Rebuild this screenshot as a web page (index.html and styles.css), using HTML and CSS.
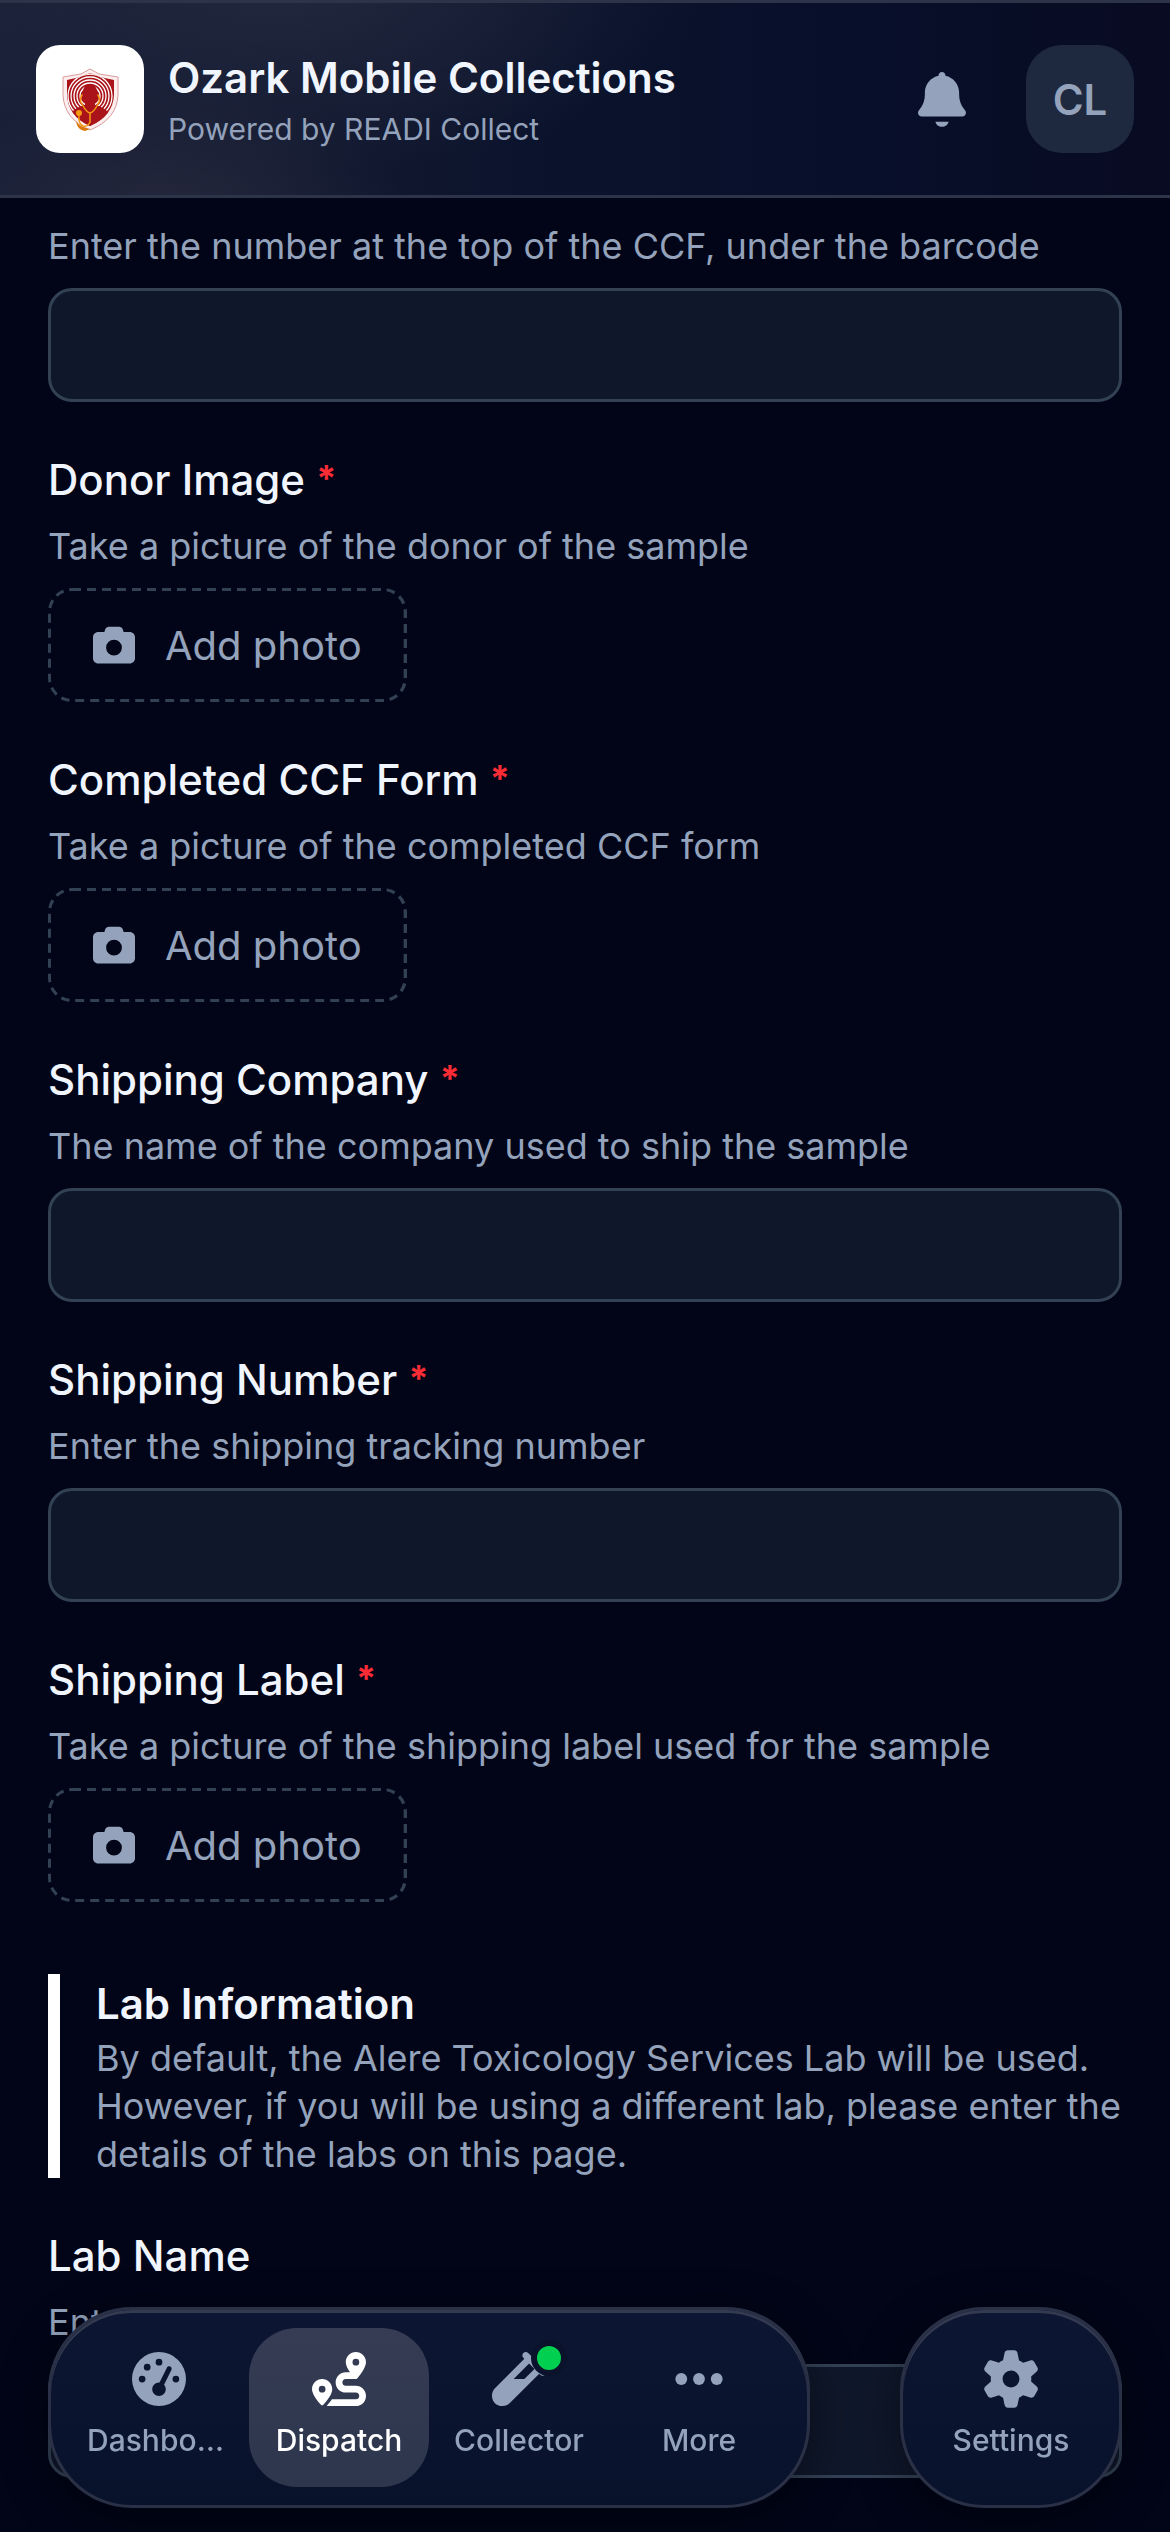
FILE: index.html
```html
<!DOCTYPE html>
<html lang="en">
<head>
<meta charset="utf-8">
<meta name="viewport" content="width=device-width">
<title>Ozark Mobile Collections</title>
<link rel="stylesheet" href="styles.css">
</head>
<body>
<svg class="sprite" aria-hidden="true">
  <symbol id="camera" viewBox="0 0 512 512"><path d="M149.1 64.8L138.7 96 64 96C28.7 96 0 124.7 0 160L0 416c0 35.3 28.7 64 64 64l384 0c35.3 0 64-28.7 64-64l0-256c0-35.3-28.7-64-64-64l-74.7 0-10.4-31.2C356.4 45.2 338.1 32 317.4 32L194.6 32c-20.7 0-39 13.2-45.5 32.8zM256 192a96 96 0 1 1 0 192 96 96 0 1 1 0-192z"/></symbol>
</svg>

<header class="header">
  <div class="logo">
    <svg viewBox="0 0 108 108" aria-hidden="true">
      <clipPath id="shield"><path d="M54 28 64 32 78 35V50Q77 71 54 81 32 71 31 50V35L44 32Z"/></clipPath>
      <path d="M54 24 63 29 82 32V50Q81 74 54 85 28 74 27 50V32L45 29Z" fill="#fbeeee" stroke="#dc9a9c" stroke-width="1"/>
      <g clip-path="url(#shield)">
        <rect x="27" y="24" width="55" height="62" fill="#a91319"/>
        <g fill="none" stroke="#fff" stroke-width="1.3">
          <circle cx="54" cy="51" r="10"/>
          <circle cx="54" cy="51" r="13"/>
          <circle cx="54" cy="51" r="16"/>
          <circle cx="54" cy="51" r="19"/>
          <circle cx="54" cy="51" r="22"/>
        </g>
        <path d="M47 48Q47 39 54 39 61 39 61 48 61 54 59 57V60Q68 62 73 68L72 84H36L35 68Q40 62 49 60V57Q47 54 47 48Z" fill="#a91319"/>
      </g>
      <path d="M40 76Q43 82 54 84L49 86Q41 85 40 76Z" fill="#d97708"/>
      <g fill="none" stroke="#f59a13" stroke-width="1.5" stroke-linecap="round">
        <path d="M46 50Q43 55 46 59 50 67 54 68 58 67 62 59 65 55 62 50"/>
        <path d="M54 68V77Q52 82 47 81 42 79 43 69"/>
      </g>
      <circle cx="43" cy="68" r="3" fill="#f59a13"/>
    </svg>
  </div>
  <div class="brand">
    <h1 class="brand-name">Ozark Mobile Collections</h1>
    <p class="brand-sub">Powered by READI Collect</p>
  </div>
  <button class="bell" type="button" aria-label="Notifications">
    <svg viewBox="0 0 448 512"><path d="M224 0c-17.7 0-32 14.3-32 32l0 3.2C119 50 64 114.6 64 192l0 21.7c0 48.1-16.4 94.8-46.4 132.4L7.8 358.3C2.7 364.6 0 372.4 0 380.5 0 400.1 15.9 416 35.5 416l376.9 0c19.6 0 35.5-15.9 35.5-35.5 0-8.1-2.7-15.9-7.8-22.2l-9.8-12.2C400.4 308.5 384 261.8 384 213.7l0-21.7c0-77.4-55-142-128-156.8l0-3.2c0-17.7-14.3-32-32-32zM162 464c7.1 27.6 32.2 48 62 48s54.9-20.4 62-48l-124 0z"/></svg>
  </button>
  <button class="avatar" type="button" aria-label="Account CL">CL</button>
</header>

<main class="form">
  <div class="field">
    <label class="hint" for="ccf">Enter the number at the top of the CCF, under the barcode</label>
    <input class="input" id="ccf" type="text">
  </div>
  <div class="field">
    <label class="label" for="donor">Donor Image <span class="required">*</span></label>
    <p class="hint">Take a picture of the donor of the sample</p>
    <button class="photo" id="donor" type="button"><svg class="photo-outline" aria-hidden="true"><rect width="100%" height="100%" rx="24"/></svg><svg class="photo-icon"><use href="#camera"/></svg>Add photo</button>
  </div>
  <div class="field">
    <label class="label" for="form">Completed CCF Form <span class="required">*</span></label>
    <p class="hint">Take a picture of the completed CCF form</p>
    <button class="photo" id="form" type="button"><svg class="photo-outline" aria-hidden="true"><rect width="100%" height="100%" rx="24"/></svg><svg class="photo-icon"><use href="#camera"/></svg>Add photo</button>
  </div>
  <div class="field">
    <label class="label" for="company">Shipping Company <span class="required">*</span></label>
    <p class="hint">The name of the company used to ship the sample</p>
    <input class="input" id="company" type="text">
  </div>
  <div class="field">
    <label class="label" for="number">Shipping Number <span class="required">*</span></label>
    <p class="hint">Enter the shipping tracking number</p>
    <input class="input" id="number" type="text">
  </div>
  <div class="field">
    <label class="label" for="shiplabel">Shipping Label <span class="required">*</span></label>
    <p class="hint">Take a picture of the shipping label used for the sample</p>
    <button class="photo" id="shiplabel" type="button"><svg class="photo-outline" aria-hidden="true"><rect width="100%" height="100%" rx="24"/></svg><svg class="photo-icon"><use href="#camera"/></svg>Add photo</button>
  </div>
  <section class="section-note">
    <h2 class="note-title">Lab Information</h2>
    <p class="note-text">By default, the Alere Toxicology Services Lab will be used. However, if you will be using a different lab, please enter the details of the labs on this page.</p>
  </section>
  <div class="field">
    <label class="label" for="lab">Lab Name</label>
    <p class="hint">Enter the name of the lab</p>
    <input class="input" id="lab" type="text">
  </div>
</main>

<nav class="dock" aria-label="Main">
  <div class="pill">
    <a class="tab" href="#dashboard">
      <svg class="tab-icon" viewBox="0 0 512 512"><path fill-rule="evenodd" d="M0 256a256 256 0 1 1 512 0A256 256 0 1 1 0 256zM288 96a32 32 0 1 0-64 0 32 32 0 1 0 64 0zM256 416c35.3 0 64-28.7 64-64 0-16.2-6-31.1-16-42.3l69.5-138.9c5.9-11.9 1.1-26.3-10.7-32.2s-26.3-1.1-32.2 10.7L261.1 288.2c-1.7-.1-3.4-.2-5.1-.2-35.3 0-64 28.7-64 64s28.7 64 64 64zM176 144a32 32 0 1 0-64 0 32 32 0 1 0 64 0zM96 288a32 32 0 1 0 0-64 32 32 0 1 0 0 64zM448 256a32 32 0 1 0-64 0 32 32 0 1 0 64 0z"/></svg>
      <span class="tab-label">Dashboard</span>
    </a>
    <a class="tab tab-active" href="#dispatch" aria-current="page">
      <svg class="tab-icon" viewBox="0 0 512 512"><path d="M512 96c0 50.2-59.1 125.1-84.6 155c-3.8 4.4-9.4 6.1-14.5 5L320 256c-17.7 0-32 14.3-32 32s14.3 32 32 32l96 0c53 0 96 43 96 96s-43 96-96 96l-276.4 0c8.7-9.9 19.3-22.6 30-36.8c6.3-8.4 12.8-17.6 19-27.2L416 448c17.7 0 32-14.3 32-32s-14.3-32-32-32l-96 0c-53 0-96-43-96-96s43-96 96-96l39.8 0c-21-31.5-39.8-67.7-39.8-96c0-53 43-96 96-96s96 43 96 96zM117.1 489.1c-3.8 4.3-7.2 8.1-10.1 11.3l-1.8 2-.2-.2c-6 4.6-14.6 4-20-1.8C59.8 473 0 402.5 0 352c0-53 43-96 96-96s96 43 96 96c0 30-21.1 67-43.5 97.9c-10.7 14.7-21.7 28-30.8 38.5l-.6 .7zM128 352a32 32 0 1 0 -64 0 32 32 0 1 0 64 0zM416 128a32 32 0 1 0 0-64 32 32 0 1 0 0 64z"/></svg>
      <span class="tab-label">Dispatch</span>
    </a>
    <a class="tab" href="#collector">
      <span class="icon-wrap">
        <svg class="tab-icon" viewBox="0 0 512 512"><path d="M342.6 9.4c-12.5-12.5-32.8-12.5-45.3 0s-12.5 32.8 0 45.3l9.4 9.4L28.1 342.6C10.1 360.6 0 385 0 410.5L0 416c0 53 43 96 96 96l5.5 0c25.5 0 49.9-10.1 67.9-28.1L448 205.3l9.4 9.4c12.5 12.5 32.8 12.5 45.3 0s12.5-32.8 0-45.3l-32-32-96-96-32-32zM205.3 256L352 109.3 402.7 160l-96 96-101.5 0z"/></svg>
        <span class="badge"></span>
      </span>
      <span class="tab-label">Collector</span>
    </a>
    <a class="tab" href="#more">
      <svg class="tab-icon" viewBox="0 0 512 512"><circle cx="88" cy="256" r="56"/><circle cx="256" cy="256" r="56"/><circle cx="424" cy="256" r="56"/></svg>
      <span class="tab-label">More</span>
    </a>
  </div>
  <div class="pill">
    <a class="tab" href="#settings">
      <svg class="tab-icon" viewBox="0 0 512 512"><path d="M195.1 9.5C198.1-5.3 211.2-16 226.4-16l59.8 0c15.2 0 28.3 10.7 31.3 25.5L332 79.5c14.1 6 27.3 13.7 39.3 22.8l67.8-22.5c14.4-4.8 30.2 1.2 37.8 14.4l29.9 51.8c7.6 13.2 4.9 29.8-6.5 39.9L447 233.3c.9 7.4 1.3 15 1.3 22.7s-.5 15.3-1.3 22.7l53.4 47.5c11.4 10.1 14 26.8 6.5 39.9l-29.9 51.8c-7.6 13.1-23.4 19.2-37.8 14.4l-67.8-22.5c-12.1 9.1-25.3 16.7-39.3 22.8l-14.4 69.9c-3.1 14.9-16.2 25.5-31.3 25.5l-59.8 0c-15.2 0-28.3-10.7-31.3-25.5l-14.4-69.9c-14.1-6-27.2-13.7-39.3-22.8L73.5 432.3c-14.4 4.8-30.2-1.2-37.8-14.4L5.8 366.1c-7.6-13.2-4.9-29.8 6.5-39.9l53.4-47.5c-.9-7.4-1.3-15-1.3-22.7s.5-15.3 1.3-22.7L12.3 185.8c-11.4-10.1-14-26.8-6.5-39.9L35.7 94.1c7.6-13.2 23.4-19.2 37.8-14.4l67.8 22.5c12.1-9.1 25.3-16.7 39.3-22.8L195.1 9.5zM256.3 336a80 80 0 1 0 -.6-160 80 80 0 1 0 .6 160z"/></svg>
      <span class="tab-label">Settings</span>
    </a>
  </div>
</nav>
</body>
</html>
```

FILE: styles.css
```css
:root {
  --bg: #010517;
  --text: #f1f5fd;
  --muted: #94a3bb;
  --line: #334155;
  --glass-line: #2d344a;
}

* { box-sizing: border-box; }

body {
  margin: 0;
  background: var(--bg);
  color: var(--text);
  font-family: Inter, "Liberation Sans", sans-serif;
  font-size: 36px;
  line-height: 48px;
}

h1, h2, p { margin: 0; }
button { font-family: inherit; cursor: pointer; }
svg { display: block; fill: currentColor; overflow: visible; }
.sprite { position: absolute; width: 0; height: 0; }

.header {
  position: sticky;
  top: 0;
  z-index: 2;
  display: flex;
  align-items: center;
  padding: 42px 36px;
  border-top: 3px solid var(--glass-line);
  border-bottom: 3px solid var(--glass-line);
  background:
    radial-gradient(ellipse 240px 130px at 14% 110%, #25283d 0%, #25283d00 100%),
    radial-gradient(ellipse 420px 190px at 24% -10%, #22283e 0%, #22283e00 100%),
    linear-gradient(90deg, #181f37 0%, #11182f 28%, #0a122c 52%, #080f2a 75%, #080b22 100%);
}

.logo {
  width: 108px;
  border-radius: 24px;
  background: #fff;
}

.brand { flex: 1; padding-left: 24px; }
.brand-name { font-size: 42px; line-height: 60px; font-weight: 600; }
.brand-sub { font-size: 30px; line-height: 42px; color: var(--muted); }

.bell {
  width: 108px;
  height: 108px;
  margin-right: 30px;
  padding: 0 30px;
  border: 0;
  background: none;
  color: var(--muted);
}

.avatar {
  width: 108px;
  height: 108px;
  padding: 0;
  border: 0;
  border-radius: 36px;
  background: #1e293f;
  color: var(--muted);
  font-size: 42px;
  font-weight: 600;
}

.form {
  display: flex;
  flex-direction: column;
  gap: 48px;
  padding: 24px 48px 48px;
}

.field { display: flex; flex-direction: column; align-items: flex-start; }
.label { margin-bottom: 12px; font-size: 42px; line-height: 60px; font-weight: 500; }
.required {
  color: #fb2c36;
  font-size: 36px;
  line-height: 48px;
  font-weight: 700;
  vertical-align: text-top;
}
.hint { margin-bottom: 18px; color: var(--muted); }

.input {
  width: 100%;
  height: 114px;
  padding: 0 36px;
  border: 3px solid var(--line);
  border-radius: 24px;
  background: #0f172a;
  color: var(--text);
  font: inherit;
}

.photo {
  position: relative;
  display: flex;
  align-items: center;
  gap: 30px;
  height: 114px;
  padding: 0 45px;
  overflow: hidden;
  border: 0;
  border-radius: 24px;
  background: none;
  color: var(--muted);
  font-size: 40px;
}
.photo-icon { width: 42px; height: 42px; }
/* The button clips the outer half of the stroke, which leaves a 3px dashed edge. */
.photo-outline {
  position: absolute;
  inset: 0;
  width: 100%;
  height: 100%;
  fill: none;
  stroke: var(--line);
  stroke-width: 6px;
  stroke-dasharray: 9 6;
}

.section-note {
  margin-top: 24px;
  padding-left: 36px;
  border-left: 12px solid #fff;
}
.note-title { font-size: 42px; line-height: 60px; font-weight: 600; }
.note-text { color: var(--muted); }

.dock {
  position: fixed;
  right: 48px;
  bottom: 24px;
  left: 48px;
  z-index: 2;
  display: flex;
  justify-content: space-between;
}

.pill {
  display: flex;
  padding: 18px;
  border: 3px solid #2a3147;
  border-radius: 84px;
  background: linear-gradient(180deg, #0d1632, #08122b);
  box-shadow: inset 0 3px #343a50, 0 12px 48px #00000066;
}

.tab {
  display: flex;
  flex-direction: column;
  align-items: center;
  gap: 12px;
  width: 180px;
  padding: 24px 18px;
  border-radius: 48px;
  color: var(--muted);
  text-decoration: none;
}
.tab-active { background: linear-gradient(180deg, #353c54, #2d364c); color: #fff; }
.tab-icon { width: 54px; height: 54px; }
.tab-label {
  max-width: 100%;
  overflow: hidden;
  font-size: 30px;
  line-height: 45px;
  font-weight: 500;
  text-overflow: ellipsis;
  white-space: nowrap;
}

.icon-wrap { position: relative; }
.badge {
  position: absolute;
  top: -12px;
  right: -21px;
  width: 36px;
  height: 36px;
  border: 6px solid #0b122b;
  border-radius: 50%;
  background: #00cf50;
}
```
